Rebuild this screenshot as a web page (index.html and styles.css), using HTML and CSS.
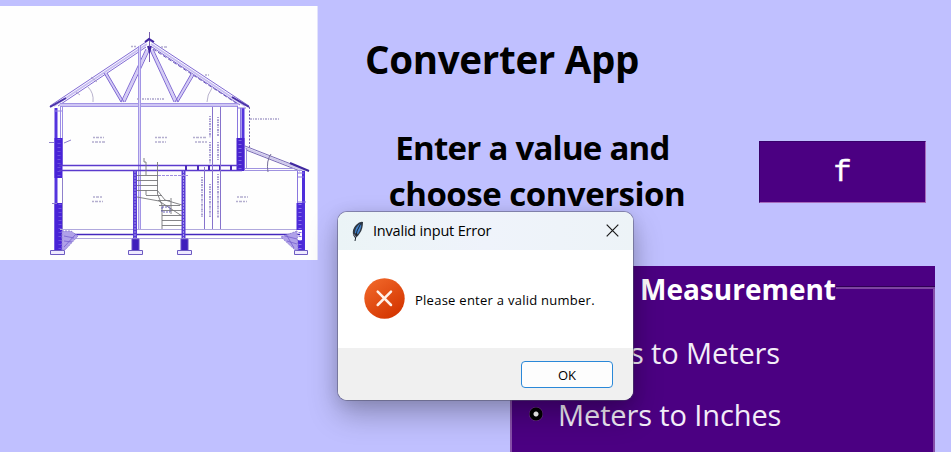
FILE: index.html
```html
<!DOCTYPE html>
<html lang="en">
<head>
<meta charset="utf-8">
<title>Converter App</title>
<link rel="stylesheet" href="styles.css">
</head>
<body>
<main class="app">
  <div class="picture">
    <svg class="house" viewBox="0 6 318 254" fill="none" stroke="#684ec8" stroke-width="1">
      <!-- roof -->
      <g stroke="#8069d4">
        <path d="M50 106L149 40L249 106M58 106L146 47M152 47L240 105"/>
        <path d="M54 106L147 44M151 44L245 106" stroke="#c8bef2" stroke-width="2"/>
        <path d="M153 49L236 103" stroke="#6a59b8" stroke-dasharray="4 2"/>
        <path d="M105.500 73L122.500 102M147.500 50L123 102M151.500 50L176 102M192.500 74L176.500 102" stroke="#d4ccf5" stroke-width="2.500"/>
        <path d="M104 73L121 102M107 73L124 102M146 49L121 102M149 51L125 102M150 50L174 102M153 49L178 102M191 74L175 102M194 75L178 102"/>
        <path d="M60 103.500H238M60 106.500H238" stroke="#a294e4"/>
        <path d="M60 105H238" stroke="#cfc7f4" stroke-width="2"/>
      </g>
      <path d="M149.500 32V62" stroke="#7a60b0"/>
      <path d="M145 42L149 39L154 42M148 46L149.500 51L151 46" stroke="#4024a0" stroke-width="2"/>
      <path d="M50 107L66 98M232 97L249 107" stroke="#4930a8" stroke-width="2"/>
      <path d="M91 77L97 82M88 87Q94 93 93 102M212 88Q207 95 207 102M76 92L80 95" stroke="#9990b8" stroke-width=".7"/>
      <!-- centre post -->
      <path d="M139.500 46V229" stroke="#d9d2f8" stroke-width="3"/>
      <path d="M138.500 46V229M140.500 46V229" stroke="#a295e5"/>
      <!-- left wall -->
      <path d="M56 108V251" stroke="#5434de" stroke-width="3"/>
      <path d="M62.500 106V165M60.500 106V138M54 111H62" stroke="#9c8de5"/>
      <path d="M58.500 138V178M58.500 203V251" stroke="#4823d7" stroke-width="8"/>
      <path d="M59 139V178M60 204V249" stroke="#6d50e0" stroke-width="3" stroke-dasharray="1 3"/>
      <path d="M62.500 178V229M49 142.500H54M64 143L71 140M52 203.500H57" stroke="#8e80cc"/>
      <!-- upper right wall -->
      <path d="M243 108V170" stroke="#5434de" stroke-width="3"/>
      <path d="M237.500 106V139M240.500 108V138M237 108H246" stroke="#8a77df"/>
      <path d="M240.500 138V171" stroke="#4823d0" stroke-width="8"/>
      <path d="M240 140V169" stroke="#7f68e2" stroke-width="3" stroke-dasharray="1 3"/>
      <path d="M249.500 107V149" stroke="#7562ac" stroke-dasharray="2 1.500"/>
      <!-- floors -->
      <path d="M59 165.500H238M59 170.500H242" stroke="#5b3bcd" stroke-width="1.500"/>
      <path d="M186 165.500V170M198 165.500V170M209 165.500V170M220 165.500V170M231 165.500V170" stroke="#4927b8" stroke-width="2"/>
      <path d="M60 229.500H300M75 238.500H290" stroke="#b0a8dd"/>
      <path d="M60 234.500H300" stroke="#4427be" stroke-width="1.700"/>
      <!-- extension roof -->
      <path d="M245 148L305 171" stroke="#cfc9ed" stroke-width="2"/>
      <path d="M245 146L309 171M246 150L300 171" stroke="#796bb5"/>
      <path d="M290 163L309 171" stroke="#4028a0" stroke-width="2"/>
      <path d="M246.500 148V169M245 168.500H295M245 170.500H302" stroke="#a093e0"/>
      <path d="M271 154Q266 161 268 172" stroke="#77709b"/>
      <!-- extension wall -->
      <path d="M303.500 171V250" stroke="#4e2edb" stroke-width="3"/>
      <path d="M297.500 171V228M298 173H304M297 177H304M297 202H306" stroke="#8a77df"/>
      <path d="M299.500 203V230M300.500 240V251" stroke="#4c2ad9" stroke-width="6"/>
      <path d="M300 204V250" stroke="#8a74ea" stroke-width="3" stroke-dasharray="1 3"/>
      <!-- partitions and footings -->
      <path d="M135 170V238M183.500 170V238" stroke="#5a3dd4" stroke-width="4"/>
      <path d="M135 171V238M183.500 171V238" stroke="#a496ec" stroke-width="1" stroke-dasharray="2 1"/>
      <path d="M132 239H139V251H132ZM181 239H188V251H181Z" fill="#3f1ebc"/>
      <path d="M50.500 250.500H64.500V254.500H50.500ZM128.500 250.500H142.500V254.500H128.500ZM177.500 250.500H191.500V254.500H177.500ZM294.500 250.500H307.500V254.500H294.500Z" fill="#eeeaff" stroke="#6d5bc2"/>
      <path d="M62 231H71L78 236L65 250H62ZM297 231L281 237L295 250H298Z" fill="#b0a1e9" stroke="#9283d4" stroke-dasharray="2 1"/>
      <path d="M64 236L74 238M64 241L72 242M285 236L297 239M287 241L297 244M64 247L76 234M294 248L286 234" stroke="#7560ce" stroke-width=".8"/>
      <!-- staircase -->
      <g stroke="#77777b" stroke-width=".9">
        <path d="M137 175.500H158M137 180.500H158M137 185.500H158M137 190.500H158M146 195.500H162M158 200.500H170M159 205.500H180M161 210.500H182M162 215.500H182M162 220.500H182M162 225.500H182"/>
        <path d="M144 158V162H146V175M157.500 162V194L162 205V229M146 190V195M137 197L159 201L182 216M157 190L165 200L182 205M171 198V214"/>
      </g>
      <path d="M158 175.500H188" stroke="#a090e0" stroke-dasharray="3 1"/>
      <path d="M162 207H170V212H162Z" stroke="#6b62bc" stroke-dasharray="2 1"/>
      <!-- dimension lines -->
      <path d="M212.500 107V229M220.500 107V229M204.500 167V229" stroke="#8673cc"/>
      <path d="M210 116V138M218 117V136M210 142V164M218 142V160M202 177V217M210 184V217M218 174V218" stroke="#a99fd2" stroke-width="2" stroke-dasharray="1 1.200 2 .7"/>
      <path d="M137 99H165M250 119H279" stroke="#aaa2cc" stroke-width="1.700" stroke-dasharray="2 1 1 1"/>
      <path d="M93 137.500H104M92 142H106M155 137.500H167M155 142H166M193 137.500H206M195 142H207M93 197H103M92 201.500H103M237 197H248M236 201.500H247M131 46.500H136M161 47H168M205 75H209" stroke="#b4aecf" stroke-width="1.700" stroke-dasharray="2 1 3 1"/>
    </svg>
  </div>
  <section class="content">
    <h1 class="title">Converter App</h1>
    <div class="entry-row">
      <p class="prompt"><span class="line-a">Enter a value and</span><br><span class="line-b">choose conversion</span></p>
      <div class="entry">f</div>
    </div>
    <div class="panel">
      <div class="legend"><span class="legend-text">Measurement</span><i class="rule"></i></div>
      <div class="options">
        <div class="option clipped"><span>s to Meters</span></div>
        <div class="option"><i class="radio"></i><span>Meters to Inches</span></div>
      </div>
    </div>
  </section>
</main>
<div class="dialog">
  <header class="bar">
    <svg class="feather" width="12" height="20" viewBox="0 0 12 20"><path d="M1 14Q0 8 4 4Q8 0 11 1Q11 8 8 12Q6 16 3 17Z" fill="#303944"/><path d="M3 12Q3 6 9 2Q10 7 6 13Z" fill="#4385d0"/><path d="M9 2Q4 9 3 20" fill="none" stroke="#18222c"/><path d="M1.500 13L4 16" stroke="#889" /></svg>
    <span class="caption">Invalid input Error</span>
    <svg class="close" width="13" height="13" viewBox="0 0 13 13"><path d="M.7.7L12.300 12.300M12.300.7L.7 12.300" fill="none" stroke="#191919" stroke-width="1.200"/></svg>
  </header>
  <div class="message">
    <svg class="error" width="41" height="41" viewBox="0 0 41 41"><defs><linearGradient id="g" x2=".7" y2="1"><stop stop-color="#f36c2d"/><stop offset="1" stop-color="#d43500"/></linearGradient></defs><circle cx="20.500" cy="20.500" r="20.200" fill="url(#g)"/><path d="M13.700 13.700L27 27M27 13.700L13.700 27" stroke="#fff0e8" stroke-width="2.500" stroke-linecap="round"/></svg>
    <span class="text">Please enter a valid number.</span>
  </div>
  <footer class="actions"><button class="ok">OK</button></footer>
</div>
</body>
</html>
```
FILE: styles.css
```css
* { box-sizing: border-box; }
body { margin: 0; width: 951px; height: 452px; overflow: hidden; background: #c0c0ff; font-family: "Open Sans", "Noto Sans", sans-serif; color: #000; }
.app { display: grid; grid-template-columns: 318px 1fr; height: 452px; }
.picture { height: 254px; margin-top: 6px; background: #fefefe; border-right: 1px solid #e3e3fb; }
.house { display: block; width: 318px; height: 254px; }
.title { margin: 0; padding: 32px 0 0 47px; font-size: 38.500px; line-height: 54px; height: 125px; font-weight: 700; letter-spacing: -.3px; white-space: nowrap; }
.entry-row { display: flex; height: 141px; }
.prompt { margin: 0 0 0 59px; width: 320px; text-align: center; font-size: 33px; line-height: 46px; font-weight: 700; white-space: nowrap; }
.line-a { letter-spacing: -.75px; margin-right: 9px; }
.line-b { letter-spacing: -.5px; }
.entry { width: 167px; height: 62px; margin: 16px 0 0 62px; background: #4b0082; border: 1px solid; border-color: #38006a #a66bbb #a66bbb #38006a; color: #fff; font: 30px/62px "Liberation Mono", monospace; -webkit-text-stroke: .5px #fff; text-align: center; }
.panel { margin-left: 192px; width: 425px; height: 186px; background: #4b0082; color: #fff; }
.legend { display: flex; height: 46px; padding-left: 130px; align-items: flex-start; }
.legend-text { font-size: 28px; font-weight: 700; line-height: 46px; }
.rule { flex: 1; height: 3px; margin-top: 20px; border-top: 1px solid #2f0055; border-bottom: 2px solid #7d46a0; }
.options { margin-top: -24px; padding: 34px 0 0 17px; height: 164px; border: solid #8650a8; border-width: 0 2px 0 2px; }
.option { display: flex; height: 62px; align-items: center; font-size: 29px; line-height: 62px; letter-spacing: -.12px; color: #f3edf8; white-space: nowrap; }
.option span { margin-left: 15px; }
.clipped { width: 251px; justify-content: flex-end; }
.radio { width: 14px; height: 14px; margin-top: -3px; border-radius: 50%; background: radial-gradient(circle, #fff 0 2px, #000 3px 6px, #75408b 7px); }
.dialog { position: absolute; left: 338px; top: 212px; width: 295px; height: 188px; border-radius: 9px; overflow: hidden; background: #fff; box-shadow: 0 0 0 1px rgba(80,80,105,.5), 0 14px 30px rgba(0,0,0,.28), 0 2px 16px rgba(0,0,0,.1); }
.bar { display: flex; align-items: center; height: 38px; padding: 0 14px 1px 14px; background: linear-gradient(90deg, #ebf4f6, #eff3fb 50%, #edf3f7); }
.caption { flex: 1; margin-left: 9px; font-size: 14.500px; letter-spacing: -.2px; }
.message { display: flex; align-items: center; height: 98px; padding-left: 26px; }
.error { margin-top: -1px; }
.text { margin: 1px 0 0 10px; font-size: 13px; letter-spacing: .26px; white-space: nowrap; }
.actions { display: flex; justify-content: flex-end; height: 52px; padding: 13px 20px 0 0; background: #f0f0f0; }
.ok { width: 92px; height: 27px; padding: 0; border: 1.500px solid #2a88d8; border-radius: 4px; background: #fdfdfd; color: #000; font: 13px "Open Sans", sans-serif; }
```
